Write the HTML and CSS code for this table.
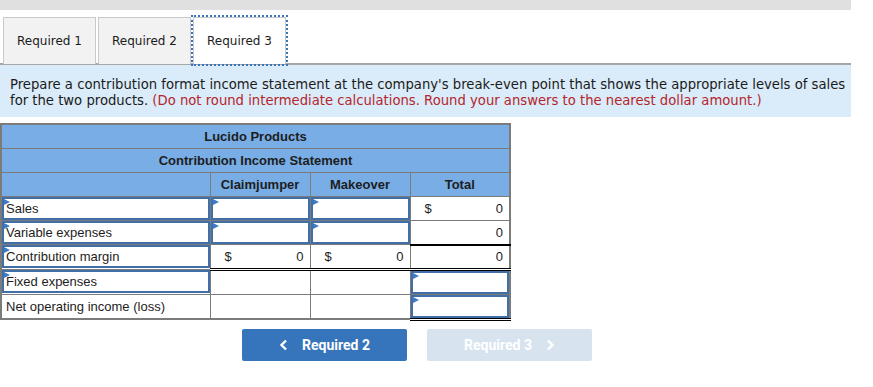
FILE: index.html
```html
<!DOCTYPE html>
<html lang="en">
<head>
    <meta charset="utf-8">
    <title>Break-even Statement</title>
    <link rel="stylesheet" href="styles.css">
</head>
<body>

<div class="page">
    <div class="topbar"></div>

    <div class="tabs">
        <button class="tab">Required 1</button>
        <button class="tab">Required 2</button>
        <button class="tab active">Required 3</button>
    </div>

    <div class="prompt">
        Prepare a contribution format income statement at the company's break-even point that shows the appropriate levels of sales
        for the two products. <span class="note">(Do not round intermediate calculations. Round your answers to the nearest dollar amount.)</span>
    </div>

    <table class="stmt">
        <colgroup>
            <col class="c-label">
            <col class="c-num">
            <col class="c-num">
            <col class="c-num">
        </colgroup>
        <thead>
            <tr><th colspan="4">Lucido Products</th></tr>
            <tr><th colspan="4">Contribution Income Statement</th></tr>
            <tr><th></th><th>Claimjumper</th><th>Makeover</th><th>Total</th></tr>
        </thead>
        <tbody>
            <tr>
                <td class="in"><div class="box marked">Sales</div></td>
                <td class="in"><div class="box marked"></div></td>
                <td class="in"><div class="box marked"></div></td>
                <td class="num"><span class="cur">$</span>0</td>
            </tr>
            <tr>
                <td class="in"><div class="box marked">Variable expenses</div></td>
                <td class="in"><div class="box marked"></div></td>
                <td class="in"><div class="box marked"></div></td>
                <td class="num rule">0</td>
            </tr>
            <tr>
                <td class="in"><div class="box marked">Contribution margin</div></td>
                <td class="num dbl"><span class="cur">$</span>0</td>
                <td class="num dbl"><span class="cur">$</span>0</td>
                <td class="num dbl">0</td>
            </tr>
            <tr>
                <td class="in"><div class="box marked">Fixed expenses</div></td>
                <td></td>
                <td></td>
                <td class="in"><div class="box marked"></div></td>
            </tr>
            <tr>
                <td class="plain">Net operating income (loss)</td>
                <td></td>
                <td></td>
                <td class="in dbl"><div class="box marked"></div></td>
            </tr>
        </tbody>
    </table>

    <div class="nav">
        <button class="navbtn">
            <svg width="10" height="12" viewBox="0 0 10 12"><polyline points="7,1.5 2.5,6 7,10.5" fill="none" stroke="#fff" stroke-width="2.4"/></svg>
            Required 2
        </button>
        <button class="navbtn off">
            Required 3
            <svg width="10" height="12" viewBox="0 0 10 12"><polyline points="3,1.5 7.5,6 3,10.5" fill="none" stroke="#fff" stroke-width="2.4"/></svg>
        </button>
    </div>
</div>

</body>
</html>
```

FILE: styles.css
```css
html, body {
    margin: 0;
    padding: 0;
    background: #ffffff;
}

.page {
    width: 851px;
    font-family: "DejaVu Sans", Verdana, sans-serif;
    color: #1b1b1b;
}

.topbar {
    height: 10px;
    background: #e0e0e0;
}

/* tab strip */
.tabs {
    display: flex;
    gap: 2px;
    padding: 7px 0 0 3px;
    border-bottom: 2px solid #a6a6a6;
}

.tab {
    width: 93px;
    height: 47px;
    margin-bottom: -1px;
    background: #f2f2f2;
    border: 1px solid #c9c9c9;
    border-bottom: none;
    font: 12px "DejaVu Sans", Verdana, sans-serif;
    color: #1b1b1b;
    padding: 0;
}

.tab.active {
    background: #ffffff;
    outline: 2px dotted #3b74bb;
    outline-offset: 0;
}

/* question text */
.prompt {
    background: #daebf9;
    padding: 12px 3px 8px 10px;
    font-size: 13.2px;
    line-height: 16px;
}

.note {
    color: #b5252b;
}

/* statement table */
.stmt {
    margin-top: 6px;
    width: 510px;
    table-layout: fixed;
    border-collapse: collapse;
    border: 2px solid #7b7b7b;
    font: 13px "Liberation Sans", Arial, sans-serif;
    color: #1d1d1d;
}

.c-label { width: 209px; }
.c-num { width: 100px; }

.stmt th {
    height: 23px;
    padding: 0;
    background: #78ade5;
    border: 1px solid #7b7b7b;
    font-weight: bold;
    text-align: center;
}

.stmt td {
    height: 22px;
    padding: 0 6px;
    border: 1px solid #7b7b7b;
}

.stmt td.in {
    padding: 0;
}

.stmt td.plain {
    padding-left: 4px;
}

.stmt td.num {
    text-align: right;
}

.stmt td.rule {
    border-bottom: 2px solid #000;
}

.stmt td.dbl {
    border-bottom: 3px double #000;
}

.cur {
    float: left;
    padding-left: 8px;
}

.box {
    position: relative;
    box-sizing: border-box;
    height: 23px;
    line-height: 19px;
    padding: 0 2px;
    border: 2px solid #3f6fa6;
}

/* little dropdown/entry marker in the corner */
.box.marked::before {
    content: "";
    position: absolute;
    top: 0;
    left: 0;
    border-left: 6px solid #3d7bc6;
    border-top: 3px solid transparent;
    border-bottom: 3px solid transparent;
}

/* previous / next */
.nav {
    display: flex;
    gap: 20px;
    padding: 8px 0 0 242px;
}

.navbtn {
    display: flex;
    align-items: center;
    justify-content: center;
    gap: 13px;
    width: 165px;
    height: 32px;
    border: none;
    border-radius: 2px;
    background: #3674bb;
    color: #ffffff;
    font: bold 14px Roboto, "Liberation Sans", sans-serif;
}

.navbtn.off {
    background: #d8e3f0;
}
```
